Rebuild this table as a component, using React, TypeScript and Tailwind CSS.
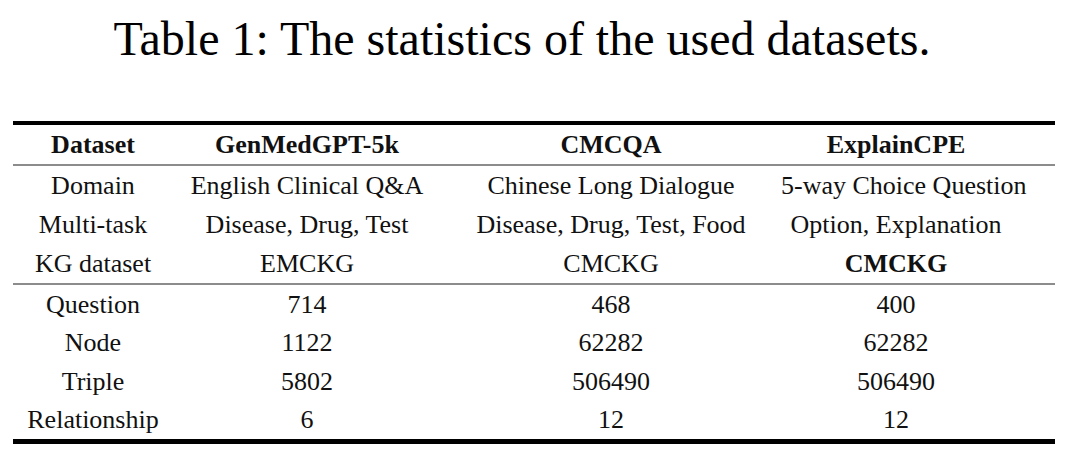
import React from 'react';

type Cell = { text: string; bold?: boolean };

const header = ['Dataset', 'GenMedGPT-5k', 'CMCQA', 'ExplainCPE'];

const groupA: Cell[][] = [
  [{ text: 'Domain' }, { text: 'English Clinical Q&A' }, { text: 'Chinese Long Dialogue' }, { text: '5-way Choice Question' }],
  [{ text: 'Multi-task' }, { text: 'Disease, Drug, Test' }, { text: 'Disease, Drug, Test, Food' }, { text: 'Option, Explanation' }],
  [{ text: 'KG dataset' }, { text: 'EMCKG' }, { text: 'CMCKG' }, { text: 'CMCKG', bold: true }],
];

const groupB: Cell[][] = [
  [{ text: 'Question' }, { text: '714' }, { text: '468' }, { text: '400' }],
  [{ text: 'Node' }, { text: '1122' }, { text: '62282' }, { text: '62282' }],
  [{ text: 'Triple' }, { text: '5802' }, { text: '506490' }, { text: '506490' }],
  [{ text: 'Relationship' }, { text: '6' }, { text: '12' }, { text: '12' }],
];

const Row: React.FC<{ cells: Cell[]; h: string }> = ({ cells, h }) => (
  <div className={`grid grid-cols-[160px_268px_340px_274px] items-center ${h}`}>
    {cells.map((c, i) => (
      <div
        key={i}
        className={`text-center whitespace-nowrap ${i === 3 ? 'pr-[44px]' : ''} ${c.bold ? 'font-bold' : ''}`}
      >
        {c.text}
      </div>
    ))}
  </div>
);

export default function App() {
  const heightsB = ['h-[39px]', 'h-[38px]', 'h-[39px]', 'h-[38px]'];

  return (
    <div className="w-[1080px] h-[460px] bg-white text-[#111] font-[Liberation_Serif] overflow-hidden">
      {/* Caption */}
      <div className="pt-[15px] pr-[36px] text-center text-[48px] leading-none text-black">
        Table 1: The statistics of the used datasets.
      </div>

      {/* Table */}
      <div className="ml-[13px] mt-[58px] w-[1042px] text-[26px] leading-none">
        <div className="h-[4px] bg-black" />
        <Row cells={header.map((t) => ({ text: t, bold: true }))} h="h-[39px]" />
        <div className="h-[2px] bg-[#8c8c8c]" />
        {groupA.map((r, i) => (
          <Row key={i} cells={r} h="h-[39px]" />
        ))}
        <div className="h-[2px] bg-[#8c8c8c]" />
        {groupB.map((r, i) => (
          <Row key={i} cells={r} h={heightsB[i]} />
        ))}
        <div className="h-[5px] bg-black" />
      </div>
    </div>
  );
}
